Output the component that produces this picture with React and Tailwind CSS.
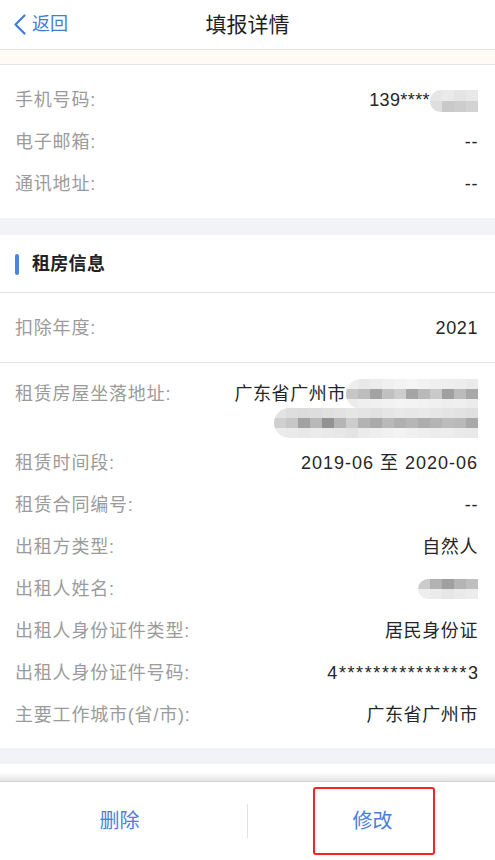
import React from "react";

const Blob = ({ rows, cell = 12, h = 11, className = "" }) => (
  <div className={"flex flex-col overflow-hidden rounded-full " + className}>
    {rows.map((r, i) => (
      <div key={i} className="flex">
        {r.map((c, j) => (
          <div key={j} className={c} style={{ width: cell, height: h }} />
        ))}
      </div>
    ))}
  </div>
);

const Row = ({ label, value, vClass = "tracking-[0.6px]" }) => (
  <div className="flex h-[42px] items-center justify-between pl-[15px] pr-[17px]">
    <span className="text-[18px] tracking-[0.8px] text-[#9b9b9b]">{label}</span>
    <span className={"text-[18px] text-[#262626] " + vClass}>{value}</span>
  </div>
);

export default function App() {
  return (
    <div className="flex h-[860px] w-[495px] flex-col overflow-hidden bg-white font-['Liberation_Sans','Noto_Sans_CJK_SC',sans-serif]">
      {/* Header */}
      <div className="grid h-[50px] grid-cols-[1fr_auto_1fr] items-center border-b border-[#e3e3e3] bg-white">
        <div className="flex items-center pl-[13px] text-[#3f7dd8]">
          <svg width="13" height="21" viewBox="0 0 13 21" fill="none">
            <path d="M11.5 1.5 L2.5 10.5 L11.5 19.5" stroke="#3f7dd8" strokeWidth="2.2" strokeLinecap="round" strokeLinejoin="round" />
          </svg>
          <span className="ml-[6px] text-[18px] leading-none">返回</span>
        </div>
        <div className="text-[21px] text-[#1f1f1f]">填报详情</div>
        <div />
      </div>
      <div className="h-[15px] border-b border-[#e3e3e3] bg-[#fdfbf4]" />

      {/* Contact section */}
      <div className="pb-[12px] pt-[15px]">
        <Row
          label="手机号码:"
          vClass=""
          value={
            <span className="flex items-center">
              <span className="tracking-[0.4px]">139****</span>
              <Blob
                className="rounded-r-none"
                cell={12}
                h={11}
                rows={[
                  ["bg-[#e6e6e6]", "bg-[#eaeaea]", "bg-[#e4e4e4]", "bg-[#e8e8e8]"],
                  ["bg-[#dedede]", "bg-[#c9c9c9]", "bg-[#cdcdcd]", "bg-[#d3d3d3]"],
                ]}
              />
            </span>
          }
        />
        <Row label="电子邮箱:" value="--" />
        <Row label="通讯地址:" value="--" />
      </div>

      <div className="h-[17px] bg-[#f2f3f7]" />

      {/* Rental section header */}
      <div className="flex h-[58px] items-center border-b border-[#e3e3e3] pl-[15px] pt-[2px]">
        <div className="h-[21px] w-[4px] rounded-full bg-[#4a82e6]" />
        <span className="ml-[13px] text-[18px] font-bold tracking-[0.3px] text-[#222]">租房信息</span>
      </div>

      <div className="flex h-[71px] items-center justify-between border-b border-[#e3e3e3] pl-[15px] pr-[17px] pt-[2px]">
        <span className="text-[18px] tracking-[0.8px] text-[#9b9b9b]">扣除年度:</span>
        <span className="text-[18px] tracking-[0.6px] text-[#262626]">2021</span>
      </div>

      <div className="flex justify-between pb-[4px] pl-[15px] pr-[17px] pt-[17px]">
        <span className="text-[18px] leading-[28px] tracking-[0.8px] text-[#9b9b9b]">租赁房屋坐落地址:</span>
        <div className="flex flex-col items-end">
          <div className="flex h-[28px] items-center">
            <span className="text-[18px] leading-[28px] tracking-[0.6px] text-[#262626]">广东省广州市</span>
            <Blob
              className="rounded-r-none"
              cell={12}
              h={10}
              rows={[
                ["bg-[#eeeeee]", "bg-[#e9e9e9]", "bg-[#ececec]", "bg-[#f0f0f0]", "bg-[#f3f3f3]", "bg-[#f5f5f5]", "bg-[#f2f2f2]", "bg-[#efefef]", "bg-[#eeeeee]", "bg-[#ededed]", "bg-[#eaeaea]"],
                ["bg-[#c6c6c6]", "bg-[#bdbdbd]", "bg-[#a3a3a3]", "bg-[#c1c1c1]", "bg-[#cdcdcd]", "bg-[#a5a5a5]", "bg-[#b9b9b9]", "bg-[#c9c9c9]", "bg-[#a0a0a0]", "bg-[#bbbbbb]", "bg-[#a8a8a8]"],
                ["bg-[#ececec]", "bg-[#efefef]", "bg-[#f0f0f0]", "bg-[#f2f2f2]", "bg-[#f4f4f4]", "bg-[#f3f3f3]", "bg-[#f1f1f1]", "bg-[#f0f0f0]", "bg-[#eeeeee]", "bg-[#efefef]", "bg-[#ececec]"],
              ]}
            />
          </div>
          <Blob
            className="rounded-r-none"
            cell={12}
            h={10}
            rows={[
              ["bg-[#e3e3e3]", "bg-[#dedede]", "bg-[#dcdcdc]", "bg-[#dddddd]", "bg-[#e0e0e0]", "bg-[#e2e2e2]", "bg-[#e6e6e6]", "bg-[#e4e4e4]", "bg-[#e1e1e1]", "bg-[#e5e5e5]", "bg-[#e8e8e8]", "bg-[#e7e7e7]", "bg-[#e9e9e9]", "bg-[#e6e6e6]", "bg-[#e4e4e4]", "bg-[#e2e2e2]", "bg-[#e0e0e0]"],
              ["bg-[#cfcfcf]", "bg-[#c6c6c6]", "bg-[#a2a2a2]", "bg-[#b8b8b8]", "bg-[#929292]", "bg-[#b5b5b5]", "bg-[#cdcdcd]", "bg-[#b3b3b3]", "bg-[#aaaaaa]", "bg-[#b9b9b9]", "bg-[#b0b0b0]", "bg-[#b6b6b6]", "bg-[#adadad]", "bg-[#b4b4b4]", "bg-[#bcbcbc]", "bg-[#b9b9b9]", "bg-[#a9a9a9]"],
              ["bg-[#ececec]", "bg-[#eaeaea]", "bg-[#e8e8e8]", "bg-[#ebebeb]", "bg-[#e9e9e9]", "bg-[#e7e7e7]", "bg-[#e4e4e4]", "bg-[#ebebeb]", "bg-[#eeeeee]", "bg-[#f1f1f1]", "bg-[#f3f3f3]", "bg-[#f0f0f0]", "bg-[#eeeeee]", "bg-[#ececec]", "bg-[#ededed]", "bg-[#eaeaea]", "bg-[#e9e9e9]"],
            ]}
          />
        </div>
      </div>

      <div className="pb-[12px]">
        <Row label="租赁时间段:" value="2019-06 至 2020-06" vClass="tracking-[1px]" />
        <Row label="租赁合同编号:" value="--" />
        <Row label="出租方类型:" value="自然人" />
        <Row
          label="出租人姓名:"
          vClass=""
          value={
            <Blob
              className="rounded-r-none"
              cell={12}
              h={10}
              rows={[
                ["bg-[#cccccc]", "bg-[#b2b2b2]", "bg-[#a0a0a0]", "bg-[#b4b4b4]", "bg-[#bfbfbf]"],
                ["bg-[#eeeeee]", "bg-[#ebebeb]", "bg-[#e6e6e6]", "bg-[#eaeaea]", "bg-[#ededed]"],
              ]}
            />
          }
        />
        <Row label="出租人身份证件类型:" value="居民身份证" />
        <Row label="出租人身份证件号码:" value="4***************3" vClass="tracking-[1.6px] mr-[-1.6px]" />
        <Row label="主要工作城市(省/市):" value="广东省广州市" />
      </div>

      <div className="h-[16px] bg-[#f2f3f7]" />
      <div className="h-[18px] border-b border-[#d4d4d4] bg-gradient-to-b from-white via-white to-[#e4e4e4]" />

      {/* Bottom bar */}
      <div className="flex h-[78px] items-center bg-white">
        <div className="flex flex-1 items-center justify-center">
          <span className="mr-[8px] text-[20px] text-[#4a80d8]">删除</span>
        </div>
        <div className="h-[34px] w-px bg-[#e2e2e2]" />
        <div className="flex flex-1 items-center justify-center">
          <div className="ml-[4px] flex h-[68px] w-[122px] items-center justify-center rounded-[3px] border-2 border-[#ff2020]">
            <span className="mr-[2px] text-[20px] text-[#4a80d8]">修改</span>
          </div>
        </div>
      </div>
    </div>
  );
}
